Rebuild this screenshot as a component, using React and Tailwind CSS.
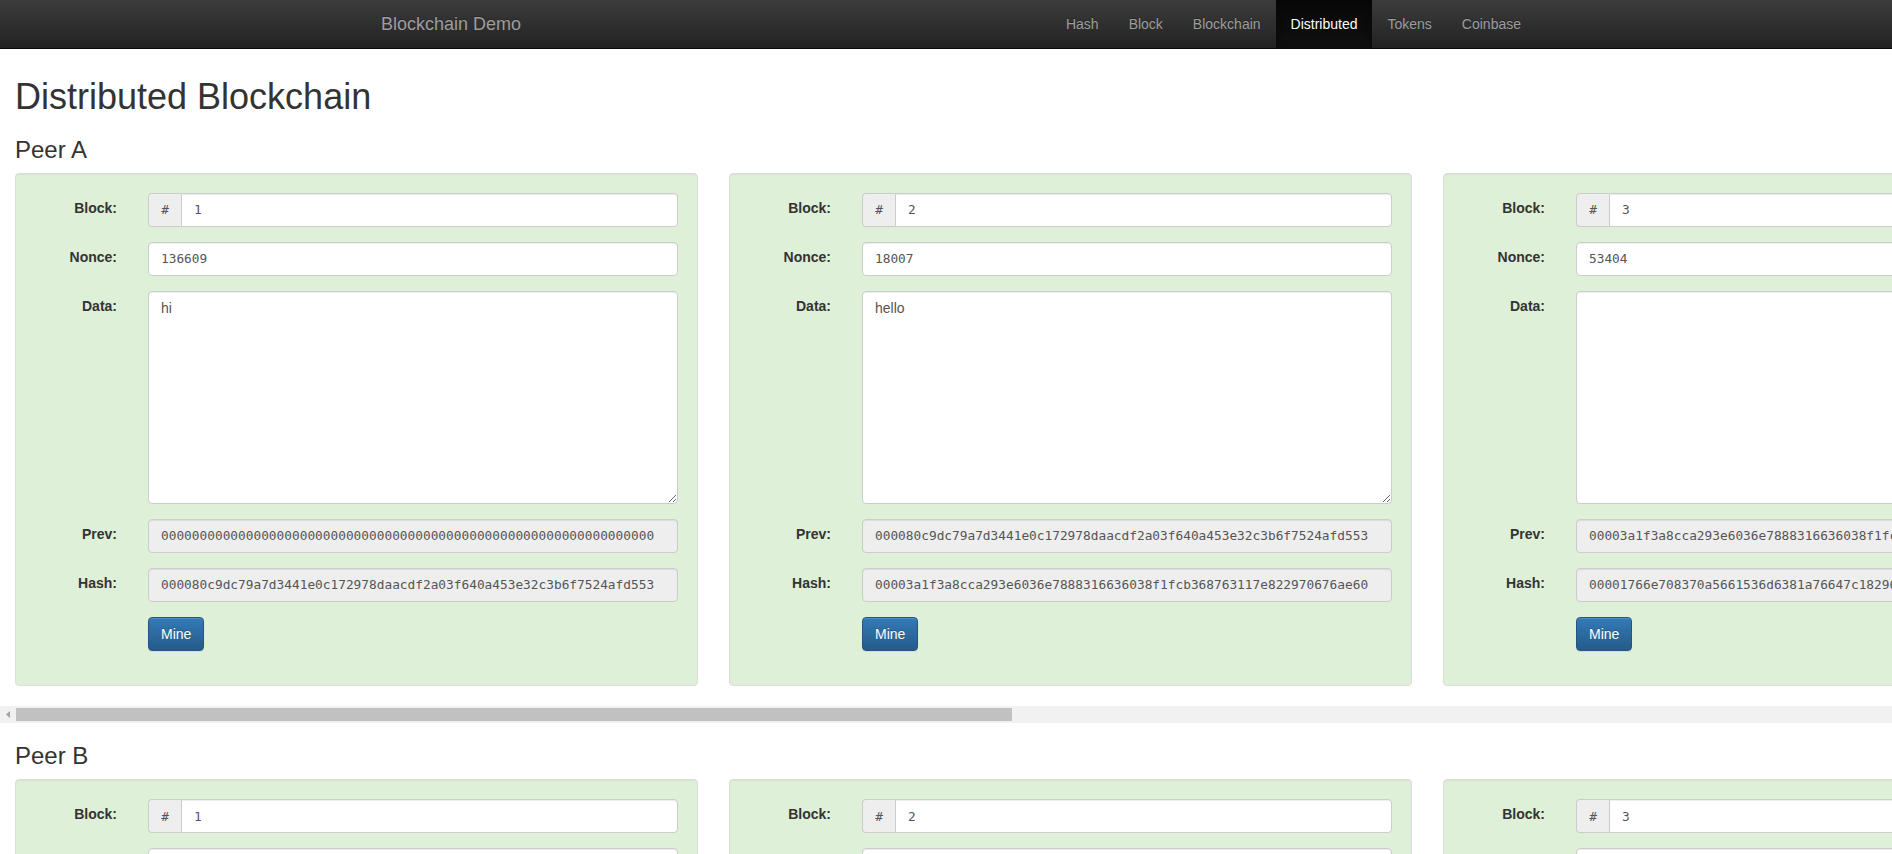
import React from "react";

const H1 = "000080c9dc79a7d3441e0c172978daacdf2a03f640a453e32c3b6f7524afd553";
const H2 = "00003a1f3a8cca293e6036e7888316636038f1fcb368763117e822970676ae60";
const H3 = "00001766e708370a5661536d6381a76647c18296d8f2b5e1c4a9037be6d5f2a1";
const H4 = "0000b2f48c1e9d3a7f6052c8e4b19d7a3f6c0e85b2d94a17c3e8f5062b9d4a71";
const H5 = "0000e79c3a5d1f8b2e6c4a90d7b3f1e5c8a2d6b9f0e4c7a1d3b5f8e2a6c9d0b4";

const blocks = [
  { n: 1, nonce: "136609", data: "hi", prev: "0".repeat(64), hash: H1 },
  { n: 2, nonce: "18007", data: "hello", prev: H1, hash: H2 },
  { n: 3, nonce: "53404", data: "", prev: H2, hash: H3 },
  { n: 4, nonce: "21679", data: "", prev: H3, hash: H4 },
  { n: 5, nonce: "33902", data: "", prev: H4, hash: H5 },
];

const navItems = ["Hash", "Block", "Blockchain", "Distributed", "Tokens", "Coinbase"];

const monoCls = "font-['DejaVu_Sans_Mono',monospace] text-[12.8px]";

function Label({ children }) {
  return <div className="pt-[5px] text-right text-[14px] font-bold leading-5 text-[#333]">{children}</div>;
}

function Field({ value, readOnly }) {
  return (
    <input
      readOnly
      value={value}
      className={`h-[34px] w-full rounded-[4px] border border-[#ccc] px-[12px] py-[6px] leading-5 text-[#555] shadow-[inset_0_1px_1px_rgba(0,0,0,0.075)] outline-none ${monoCls} ${
        readOnly ? "bg-[#eee]" : "bg-white"
      }`}
    />
  );
}

function Card({ b }) {
  return (
    <div className="w-[683px] shrink-0 rounded-[4px] border border-[#dcdcdc] bg-[#dff0d8] px-[19px] pt-[19px] pb-[34px] shadow-[inset_0_1px_1px_rgba(0,0,0,0.05)]">
      <div className="grid grid-cols-[82px_1fr] gap-x-[31px] gap-y-[15px]">
        <Label>Block:</Label>
        <div className="flex h-[34px]">
          <span
            className={`flex w-[33px] shrink-0 items-center justify-center rounded-l-[4px] border border-r-0 border-[#ccc] bg-[#eee] text-[#555] ${monoCls}`}
          >
            #
          </span>
          <input
            readOnly
            value={b.n}
            className={`h-[34px] w-full rounded-r-[4px] border border-[#ccc] bg-white px-[12px] py-[6px] leading-5 text-[#555] shadow-[inset_0_1px_1px_rgba(0,0,0,0.075)] outline-none ${monoCls}`}
          />
        </div>

        <Label>Nonce:</Label>
        <Field value={b.nonce} />

        <Label>Data:</Label>
        <textarea
          readOnly
          value={b.data}
          className="block h-[213px] w-full rounded-[4px] border border-[#ccc] bg-white px-[12px] py-[6px] text-[14px] leading-5 text-[#555] shadow-[inset_0_1px_1px_rgba(0,0,0,0.075)] outline-none"
        />

        <Label>Prev:</Label>
        <Field value={b.prev} readOnly />

        <Label>Hash:</Label>
        <Field value={b.hash} readOnly />

        <div />
        <div>
          <button className="h-[34px] rounded-[4px] border border-[#245580] bg-[linear-gradient(to_bottom,#337ab7_0%,#265a88_100%)] px-[12px] text-[14px] leading-5 text-white [text-shadow:0_-1px_0_rgba(0,0,0,0.2)] shadow-[inset_0_1px_0_rgba(255,255,255,0.15),0_1px_1px_rgba(0,0,0,0.075)]">
            Mine
          </button>
        </div>
      </div>
    </div>
  );
}

function ScrollBar() {
  return (
    <div className="flex h-[17px] bg-[#f1f1f1]">
      <div className="flex w-[16px] shrink-0 items-center justify-center">
        <svg width="4" height="7" viewBox="0 0 4 7">
          <path d="M4 0 L0 3.5 L4 7 Z" fill="#a3a3a3" />
        </svg>
      </div>
      <div className="my-[2px] h-[13px] w-[996px] bg-[#c1c1c1]" />
    </div>
  );
}

function Peer({ name }) {
  return (
    <section>
      <h3 className="mt-[20px] mb-[10px] px-[15px] text-[24px] font-normal leading-[1.1] text-[#333]">{name}</h3>
      <div className="overflow-hidden">
        <div className="flex w-max gap-[31px] px-[15px] pb-[20px]">
          {blocks.map((b) => (
            <Card key={b.n} b={b} />
          ))}
        </div>
      </div>
      <ScrollBar />
    </section>
  );
}

export default function App() {
  return (
    <div className="h-screen overflow-hidden bg-white font-['Liberation_Sans',Arial,sans-serif] text-[14px] text-[#333]">
      <nav className="h-[49px] border-b border-[#080808] bg-[linear-gradient(to_bottom,#3c3c3c_0%,#222_100%)]">
        <div className="ml-[366px] flex h-full w-[1170px] justify-between">
          <a className="px-[15px] py-[14px] text-[18px] leading-5 text-[#9d9d9d] [text-shadow:0_-1px_0_rgba(0,0,0,0.25)]">
            Blockchain Demo
          </a>
          <ul className="flex h-full">
            {navItems.map((item) =>
              item === "Distributed" ? (
                <li
                  key={item}
                  className="h-full bg-[linear-gradient(to_bottom,#080808_0%,#0f0f0f_100%)] px-[15px] py-[14px] leading-5 text-white shadow-[inset_0_3px_9px_rgba(0,0,0,0.25)] [text-shadow:0_-1px_0_rgba(0,0,0,0.25)]"
                >
                  {item}
                </li>
              ) : (
                <li
                  key={item}
                  className="h-full px-[15px] py-[14px] leading-5 text-[#9d9d9d] [text-shadow:0_-1px_0_rgba(0,0,0,0.25)]"
                >
                  {item}
                </li>
              )
            )}
          </ul>
        </div>
      </nav>

      <h1 className="mt-[28px] px-[15px] text-[36px] font-normal leading-[1.1] text-[#333]">Distributed Blockchain</h1>

      <Peer name="Peer A" />
      <Peer name="Peer B" />
      <Peer name="Peer C" />
    </div>
  );
}
